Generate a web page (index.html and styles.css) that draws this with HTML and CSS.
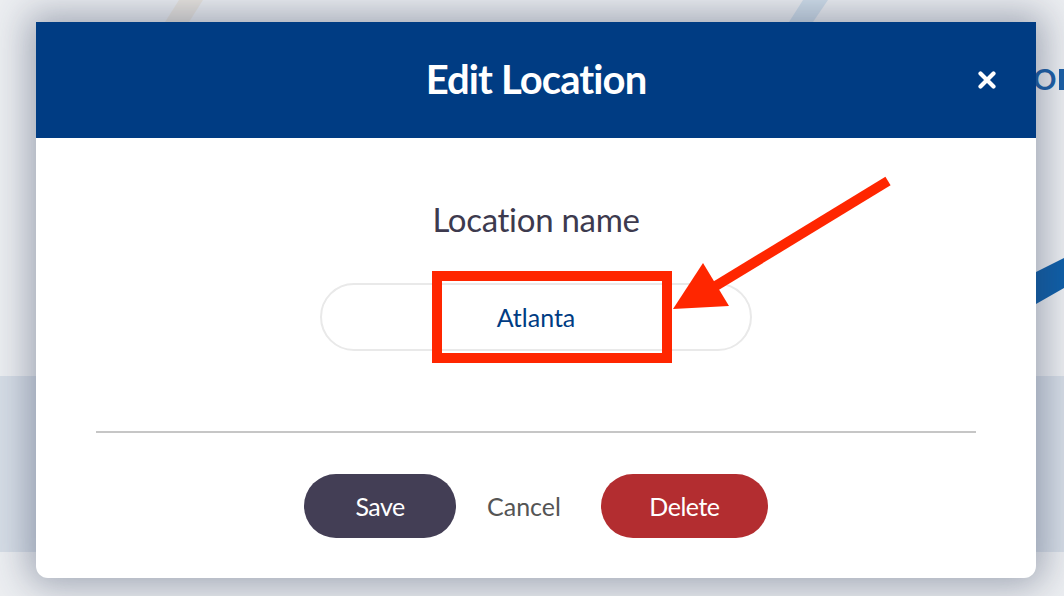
FILE: index.html
```html
<!DOCTYPE html>
<html lang="en">

<head>
    <meta charset="UTF-8">
    <meta name="viewport" content="width=device-width, initial-scale=1.0">
    <title>Edit Location</title>
    <link rel="stylesheet" href="styles.css">
</head>

<body>
    <svg class="backdrop" width="1064" height="596" viewBox="0 0 1064 596">
        <polygon points="165,22 179,0 203,0 189,22" fill="#e6dccd" opacity=".55" />
        <polygon points="789,22 803,0 828,0 813,22" fill="#c3d5e6" opacity=".7" />
        <polygon points="1036,272 1064,258 1064,288 1036,304" fill="#0f5fa8" />
        <text x="1033" y="90" class="peek">O</text>
        <rect x="1059" y="69" width="5" height="21" fill="#1b5fa6" />
    </svg>

    <div class="modal">
        <div class="modal-head">
            <div></div>
            <h1>Edit Location</h1>
            <button class="close" aria-label="Close">
                <svg width="18" height="18" viewBox="0 0 18 18">
                    <path d="M2.5 2.5 L15.5 15.5 M15.5 2.5 L2.5 15.5" stroke="#fff" stroke-width="4.2" stroke-linecap="round" />
                </svg>
            </button>
        </div>

        <div class="modal-body">
            <label for="locname">Location name</label>
            <input type="text" id="locname" value="Atlanta" autocomplete="off">
            <hr>
            <div class="actions">
                <button class="btn save">Save</button>
                <button class="cancel">Cancel</button>
                <button class="btn delete">Delete</button>
            </div>
        </div>
    </div>

    <svg class="markup" width="1064" height="596" viewBox="0 0 1064 596">
        <rect x="437" y="276" width="230" height="82" fill="none" stroke="#ff2600" stroke-width="10" />
        <line x1="888" y1="181" x2="714" y2="287" stroke="#ff2600" stroke-width="10" />
        <polygon points="673,309 703,263 729,306" fill="#ff2600" />
    </svg>
</body>

</html>
```

FILE: styles.css
```css
html,
body,
input,
button {
    font-family: 'Lato', 'Noto Sans', sans-serif;
}

body {
    margin: 0;
    height: 596px;
    overflow: hidden;
    position: relative;
    background: linear-gradient(to bottom, #eceef1 376px, #d6dde6 376px, #d6dde6 552px, #eceef1 552px);
}

.backdrop {
    position: absolute;
    top: 0;
    left: 0;
}

.peek {
    font-size: 29px;
    font-weight: 700;
    fill: #1b5fa6;
}

.modal {
    position: relative;
    z-index: 1;
    width: 1000px;
    margin: 22px 0 0 36px;
    background: #fff;
    border-radius: 0 0 12px 12px;
    box-shadow: 0 0 36px 8px rgba(40, 52, 84, .38);
}

.modal-head {
    height: 116px;
    background: #003c83;
    display: grid;
    grid-template-columns: 1fr auto 1fr;
    align-items: center;
}

.modal-head h1 {
    margin: 0 0 3px;
    color: #fff;
    font-size: 40px;
    font-weight: 700;
    letter-spacing: -0.9px;
}

.close {
    justify-self: end;
    margin-right: 40px;
    padding: 0;
    border: none;
    background: none;
    display: flex;
}

.modal-body {
    padding: 63px 0 40px;
    display: flex;
    flex-direction: column;
    align-items: center;
}

.modal-body label {
    font-size: 33px;
    line-height: 36px;
    color: #3d3a4e;
    letter-spacing: -0.3px;
}

#locname {
    box-sizing: border-box;
    width: 432px;
    height: 68px;
    margin-top: 46px;
    border: 2px solid #e9e9e9;
    border-radius: 34px;
    text-align: center;
    font-size: 25px;
    color: #003c83;
    outline: none;
}

hr {
    width: 880px;
    margin: 80px 0 0;
    border: none;
    border-top: 2px solid #c6c6c6;
}

.actions {
    display: flex;
    align-items: center;
    margin-top: 41px;
}

.btn {
    height: 64px;
    border-radius: 32px;
    border: none;
    color: #fff;
    font-size: 25px;
    letter-spacing: -0.5px;
}

.save {
    width: 152px;
    background: #433e55;
}

.delete {
    width: 167px;
    background: #b32d30;
}

.cancel {
    margin: 0 40px 0 31px;
    padding: 0;
    border: none;
    background: none;
    font-size: 25px;
    color: #555;
}

.markup {
    position: absolute;
    top: 0;
    left: 0;
    z-index: 2;
    pointer-events: none;
}
```
